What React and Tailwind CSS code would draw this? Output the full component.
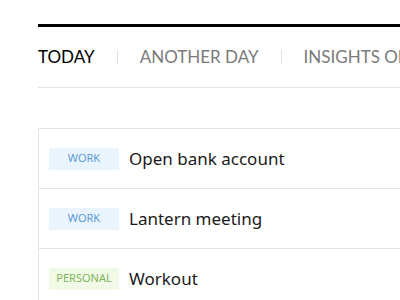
import React from "react";

const tasks = [
  { tag: "WORK", title: "Open bank account", kind: "work" },
  { tag: "WORK", title: "Lantern meeting", kind: "work" },
  { tag: "PERSONAL", title: "Workout", kind: "personal" },
];

export default function App() {
  return (
    <div className="w-[400px] h-[300px] overflow-hidden bg-white pl-[38px] pt-6">
      <div className="w-[400px]">
        <div className="h-[3px] bg-black" />
        <nav
          className="flex items-center h-[61px] border-b border-[#e6e6e6] text-[17px] whitespace-nowrap"
          style={{ fontFamily: "Lato, 'Liberation Sans', sans-serif" }}
        >
          <span className="text-black">TODAY</span>
          <span className="mx-[22px] w-px h-[14px] bg-[#e0e0e0]" />
          <span className="text-[#7a7a7a]">ANOTHER DAY</span>
          <span className="mx-[22px] w-px h-[14px] bg-[#e0e0e0]" />
          <span className="text-[#7a7a7a]">INSIGHTS ON</span>
        </nav>
        <ul
          className="mt-10 border-t border-l border-[#e3e3e3]"
          style={{ fontFamily: "'Noto Sans', 'Open Sans', sans-serif" }}
        >
          {tasks.map((t, i) => (
            <li key={i} className="flex items-center h-[60px] border-b border-[#e3e3e3] pl-[10px]">
              <span
                className={
                  "w-[70px] h-[22px] flex items-center justify-center text-[11px] " +
                  (t.kind === "work" ? "bg-[#eaf4fd] text-[#5a9ad6]" : "bg-[#f1fae7] text-[#7fb35b]")
                }
              >
                {t.tag}
              </span>
              <span className="ml-[10px] text-[17px] text-[#1a1a1a]">{t.title}</span>
            </li>
          ))}
        </ul>
      </div>
    </div>
  );
}
